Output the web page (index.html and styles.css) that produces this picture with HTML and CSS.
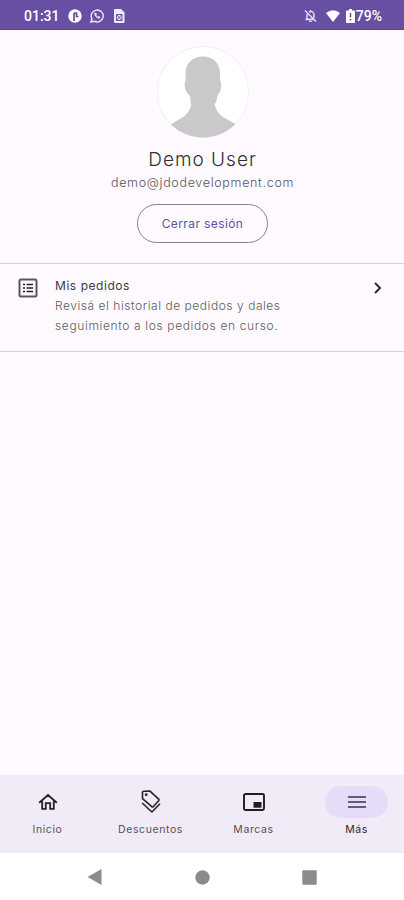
FILE: index.html
```html
<!DOCTYPE html>
<html lang="es">
<head>
<meta charset="utf-8">
<title>Más</title>
<link rel="stylesheet" href="styles.css">
</head>
<body>
<div class="phone">
  <header class="status">
    <span class="clock">01:31</span>
    <svg class="s-app" width="14" height="14" viewBox="0 0 14 14"><circle cx="7" cy="7" r="6.7" fill="#fff"/><path d="M6 12V4M6 4h2.500v3.500h2" fill="none" stroke="#684fa4" stroke-width="1.700"/></svg>
    <svg class="s-chat" width="14" height="14" viewBox="0 0 14 14" fill="none" stroke="#efe9fa"><path d="M1 13l.9-3.200A6 6 0 1 1 4.200 12.200z" stroke-width="1.400"/><path d="M4.700 4.200c-.6 2.400 2.500 5.500 5 5l.4-1.200-1.700-.8-.8.8C6.800 7.500 6.300 7 6 6.300l.7-.7-.7-1.600z" fill="#efe9fa" stroke-width=".5"/></svg>
    <svg class="s-file" width="12" height="14" viewBox="0 0 12 14"><path d="M2 0h6l3.500 3.500V13q0 1-1 1H2q-1 0-1-1V1q0-1 1-1z" fill="#f1ecfa"/><path d="M3.500 5.500h5.500v6H3.500zM3.500 5.500l5.500 6M9 5.500l-5.500 6" fill="none" stroke="#684fa4"/></svg>
    <span class="spacer"></span>
    <svg class="s-bell" width="13" height="14" viewBox="0 0 13 14" fill="none" stroke="#e9e2f6" stroke-width="1.400"><path d="M1 1.500l11 11M3 5v5.300h7M5 3c3-1.300 5 .3 5 3v3M1.500 10.500h9M6.500 1v1.500M5.300 12.400h2.400"/></svg>
    <svg class="s-wifi" width="14" height="12" viewBox="0 0 14 12"><path d="M0 3Q7-2.600 14 3L7 12z" fill="#fff"/></svg>
    <svg class="s-batt" width="9" height="14" viewBox="0 0 9 14"><path d="M3 0h3v1.500h2q1 0 1 1V13q0 1-1 1H1q-1 0-1-1V2.500q0-1 1-1h2z" fill="#fff"/><path d="M4.500 4v4.500M4.500 10v1.500" stroke="#684fa4" stroke-width="1.500"/></svg>
    <span class="percent">79%</span>
  </header>

  <section class="profile">
    <svg class="avatar" width="92" height="92" viewBox="0 0 92 92">
      <defs><clipPath id="round"><circle cx="46" cy="46" r="45.500"/></clipPath></defs>
      <circle cx="46" cy="46" r="45.500" fill="#fff" stroke="#f1eef2"/>
      <path clip-path="url(#round)" fill="#c9c9c9" d="M46 10.500C56 10.500 63 17 63 27V34Q65.500 39 63 46L60.500 49.500 59.500 55 57.500 58.500Q59.500 66 65 70.500L78.500 78 92 92H0L13.500 78.500 27 70.500Q32 66 34 60L33 50 29.500 46Q26.500 40 28.500 34V27C28.500 17 36 10.500 46 10.500z"/>
    </svg>
    <h1 class="name">Demo User</h1>
    <p class="email">demo@jdodevelopment.com</p>
    <button class="logout">Cerrar sesión</button>
  </section>

  <a class="row">
    <svg class="row-icon" width="20" height="20" viewBox="0 0 20 20" fill="none" stroke="#59565c"><rect x="1.500" y="1.500" width="17" height="17" rx="1.500" stroke-width="2"/><path d="M5 6.500h2M5 10h2M5 13.500h2M8.500 6.500H15M8.500 10H15M8.500 13.500H15" stroke="#242127" stroke-width="1.600"/></svg>
    <div class="row-text">
      <h2 class="row-title">Mis pedidos</h2>
      <p class="row-desc"><span class="line-a">Revisá el historial de pedidos y dales</span><br><span class="line-b">seguimiento a los pedidos en curso.</span></p>
    </div>
    <svg class="chevron" width="10" height="14" viewBox="0 0 10 14"><path d="M2 2l5 5-5 5" fill="none" stroke="#29272c" stroke-width="1.900"/></svg>
  </a>

  <main class="blank"></main>

  <nav class="tabs">
    <a class="tab">
      <span class="pill"><svg width="20" height="20" viewBox="0 0 20 20" fill="none" stroke="#25222c" stroke-width="1.800"><path d="M1.200 10.700L10 3l8.800 7.700M4.200 9v7.800h3.600v-5.600h4.400v5.600h3.600V9"/></svg></span>
      <span class="label l1">Inicio</span>
    </a>
    <a class="tab">
      <span class="pill"><svg width="20" height="24" viewBox="0 0 20 24" fill="none" stroke="#25222c" stroke-width="1.600" stroke-linejoin="round"><path d="M1.500 2.500q0-1.300 1.300-1.300l6.200-.1 8.700 8q.7.800 0 1.600l-5.500 6q-.7.700-1.400 0L1.500 8.700z"/><path d="M1.200 13l9.700 9 8.100-8.300"/><circle cx="5.200" cy="4.700" r=".6" fill="#25222c"/></svg></span>
      <span class="label l2">Descuentos</span>
    </a>
    <a class="tab">
      <span class="pill"><svg width="22" height="18" viewBox="0 0 22 18"><rect x="1" y="1" width="20" height="16" rx="1.500" fill="none" stroke="#1f1b27" stroke-width="1.900"/><path d="M10.500 9h8v5.700h-8z" fill="#1f1b27"/></svg></span>
      <span class="label l3">Marcas</span>
    </a>
    <a class="tab active">
      <span class="pill"><svg width="18" height="14" viewBox="0 0 18 14"><path d="M0 2h18M0 7h18M0 12h18" stroke="#665b75" stroke-width="2"/></svg></span>
      <span class="label l4">Más</span>
    </a>
  </nav>

  <footer class="system">
    <svg width="15" height="18" viewBox="0 0 15 18"><path d="M0.500 9L14.500 1v16z" fill="#8b8b8b"/></svg>
    <svg width="15" height="15" viewBox="0 0 15 15"><circle cx="7.500" cy="7.500" r="7.200" fill="#8b8b8b"/></svg>
    <svg width="15" height="15" viewBox="0 0 15 15"><rect x=".3" y=".3" width="14.400" height="14.400" rx="1" fill="#8b8b8b"/></svg>
  </footer>
</div>
</body>
</html>
```
FILE: styles.css
```css
* { box-sizing: border-box; }
body { margin: 0; background: #fff; font-family: Inter, "Open Sans", sans-serif; }
h1, h2, p { margin: 0; font-weight: 300; }
svg { display: block; flex: none; }

.phone { width: 404px; height: 900px; display: flex; flex-direction: column; background: #fefaff; overflow: hidden; }

.status { height: 30px; flex: none; display: flex; align-items: center; padding: 3px 22px 0 24px; background: #684fa4; border-bottom: 1px solid #5d4598; color: #fff; font: 500 14px Roboto, sans-serif; }
.clock { width: 44px; }
.s-chat { margin-left: 8px; }
.s-file { margin-left: 9px; }
.spacer { flex: 1; }
.s-bell { margin-right: 1px; }
.s-wifi { margin-left: 8px; }
.s-batt { margin-left: 6px; }
.percent { margin-left: 1px; }

.profile { height: 233px; flex: none; display: flex; flex-direction: column; align-items: center; padding: 16px 0 0 1px; }
.name { margin-top: 9px; font-size: 19px; line-height: 26px; letter-spacing: 1px; color: #303034; white-space: nowrap; }
.email { margin-top: 2px; font-size: 12.500px; line-height: 16px; letter-spacing: .68px; color: #55545a; }
.logout { width: 131px; height: 39px; margin-top: 13px; padding: 0; border: 1px solid #86828a; border-radius: 20px; background: transparent; font: 400 12px Inter, sans-serif; letter-spacing: .4px; color: #6650a4; }

.row { height: 89px; flex: none; display: flex; align-items: flex-start; padding: 13px 21px 0 18px; border: solid #d5d1d8; border-width: 1px 0; }
.row-icon { margin-top: 1px; }
.row-text { flex: 1; margin-left: 17px; white-space: nowrap; }
.row-title { font-size: 12px; line-height: 18px; font-weight: 400; letter-spacing: .55px; color: #3c3a3f; }
.row-desc { margin-top: 1px; font-size: 12px; line-height: 20px; color: #5c5a60; }
.line-a { letter-spacing: .54px; }
.line-b { letter-spacing: .63px; }
.chevron { margin-top: 4px; }

.blank { flex: 1; }

.tabs { height: 78px; flex: none; display: grid; grid-template-columns: repeat(4, 95px); column-gap: 8px; padding-top: 11px; background: #f0ebf7; }
.tab { display: flex; flex-direction: column; align-items: center; }
.pill { width: 63px; height: 32px; border-radius: 16px; display: flex; align-items: center; justify-content: center; }
.active .pill { background: #e7dcf7; }
.label { margin-top: 4px; font-size: 10.500px; line-height: 15px; letter-spacing: .6px; color: #55525c; }
.active .label { color: #29262e; }

.system { height: 47px; flex: none; display: flex; align-items: center; justify-content: space-between; padding: 1px 87px 0; background: #fff; }
```
